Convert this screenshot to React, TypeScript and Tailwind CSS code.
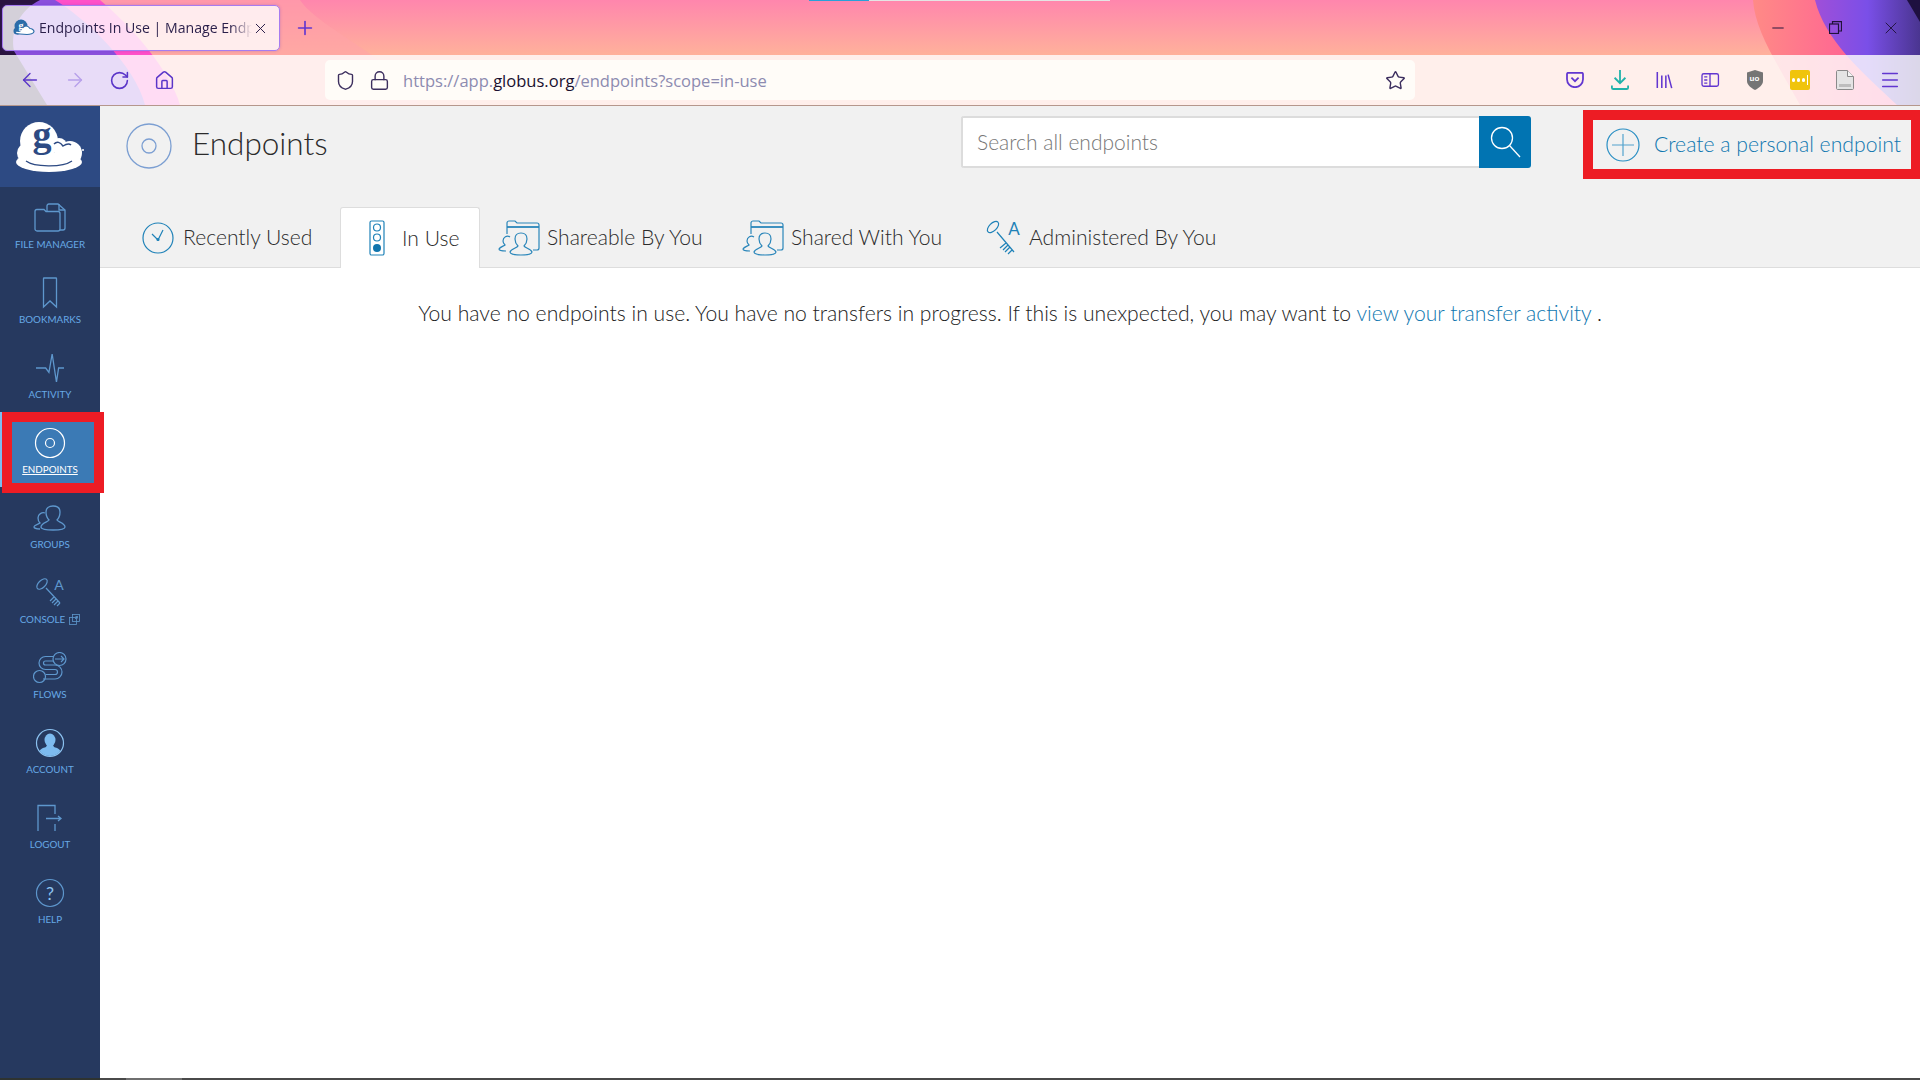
import {
  ArrowLeft,
  ArrowRight,
  Home,
  Lock,
  Menu,
  Minus,
  Plus,
  RotateCw,
  Shield,
  Star,
  X,
} from "lucide-react";
import type { ReactNode } from "react";

const Favicon = () => (
  <svg width="22" height="18" viewBox="0 0 22 18" className="shrink-0">
    <circle cx="8" cy="7" r="6.5" fill="#2b6ca8" />
    <circle cx="4" cy="12" r="3.5" fill="#2b6ca8" />
    <path d="M7 15c-3 0-5-1-5-2.500 2-1 3 .5 5-.5 2-2 3-5 6-5 2 0 3 1 4 2.500 2 0 4 1.500 4 3 0 2-4 3-7 3z" fill="#fff" stroke="#2b6ca8" strokeWidth="1.200" />
    <text x="8" y="10" textAnchor="middle" fontSize="10" fontWeight="700" fill="#fff" fontFamily="'Liberation Serif', serif">g</text>
  </svg>
);

const GlobusLogo = () => (
  <svg width="68" height="50" viewBox="0 0 68 50">
    <g fill="#fff">
      <circle cx="23" cy="19" r="19" />
      <circle cx="11" cy="31" r="10" />
      <circle cx="43" cy="24" r="8" />
      <circle cx="54" cy="31" r="12" />
      <ellipse cx="33" cy="40" rx="33" ry="10" />
    </g>
    <path d="M38 22c3-3 6-2 9 2 3-2 6-3 8-1" fill="none" stroke="#2d4a83" strokeWidth="1.500" />
    <path d="M10 39c8 6 36 7 46 0" fill="none" stroke="#2d4a83" strokeWidth="1.300" />
    <text x="26" y="25" textAnchor="middle" fontSize="38" fontWeight="700" fill="#2d4a83" fontFamily="'Liberation Serif', serif">g</text>
    <circle cx="67" cy="28" r="1" fill="#fff" />
  </svg>
);

// sidebar icons
const FileManagerIcon = () => (
  <svg width="34" height="30" viewBox="0 0 34 30" fill="none" stroke="#5e97cd" strokeWidth="1.300" className="-mt-[2px]">
    <path d="M2 9.500C2 8 3 7.500 4 7.500h7l2 2h12a2 2 0 0 1 2 2V27a2 2 0 0 1-2 2H4a2 2 0 0 1-2-2z" />
    <path d="M14 9V4c0-1 .5-2 2-2h9l7 6v18c0 1-1 2-2 2h-3" />
    <path d="M26 2v6h6" />
  </svg>
);
const BookmarkIcon = () => (
  <svg width="16" height="32" viewBox="0 0 16 32" fill="none" stroke="#5e97cd" strokeWidth="1.300">
    <path d="M2 1h12a.500.500 0 0 1 .5.500V30L8 24l-6.500 6V1.500A.500.500 0 0 1 2 1z" />
  </svg>
);
const ActivityIcon = () => (
  <svg width="28" height="28" viewBox="0 0 26 26" fill="none" stroke="#5e97cd" strokeWidth="1.200">
    <path d="M0 13H9l3 4L15 0l4 26 2-13h5" />
  </svg>
);
const EndpointsIcon = () => (
  <svg width="32" height="32" viewBox="0 0 32 32" fill="none" stroke="#fff" strokeWidth="1.200">
    <circle cx="16" cy="16" r="14.500" />
    <circle cx="16" cy="16" r="4.500" />
  </svg>
);
const GroupsIcon = () => (
  <svg width="34" height="26" viewBox="0 0 34 26" fill="none" stroke="#5e97cd" strokeWidth="1.300">
    <path d="M16 15c-1-1-3-3-3-8 0-4 3-6 7-6s7 2 7 6c0 5-2 7-3 8 1 2 8 3 8 7 0 2-5 3-12 3S8 24 8 22c0-4 7-5 8-7z" />
    <path d="M12 8c-3-1-7 1-7 5 0 2 1 4 2 5-1 1-6 2-6 4 0 1 3 2 6 2" />
  </svg>
);
const ConsoleIcon = () => (
  <svg width="32" height="32" viewBox="0 0 32 32" fill="none" stroke="#5e97cd" strokeWidth="1.200">
    <ellipse cx="8" cy="7" rx="3.500" ry="6.500" transform="rotate(45 8 7)" />
    <path d="M12 11l14 15M20 20l-4 4M22 22l-4 4M24 24l-4 4M26 26l-3 3" />
    <text x="25" y="13" textAnchor="middle" fontSize="14" fill="#5e97cd" stroke="none" fontFamily="Lato, sans-serif">A</text>
  </svg>
);
const FlowsIcon = () => (
  <svg width="34" height="32" viewBox="0 0 34 32" fill="none" stroke="#5e97cd" strokeWidth="1.200">
    <circle cx="6.500" cy="24.500" r="6" />
    <circle cx="26.500" cy="7" r="6.500" />
    <path d="M22 7h9M28 4l3 3-3 3" />
    <path d="M20 4.500H12.500a6.500 6.500 0 0 0 0 13H22a2.500 2.500 0 0 1 0 5H13" />
    <path d="M20 9H12.500a2 2 0 0 0 0 4H22a7 7 0 0 1 0 14H10" />
  </svg>
);
const AccountIcon = () => (
  <svg width="30" height="30" viewBox="0 0 30 30">
    <defs>
      <clipPath id="account-clip">
        <circle cx="15" cy="15" r="13" />
      </clipPath>
    </defs>
    <circle cx="15" cy="15" r="13.500" fill="none" stroke="#8cc2f0" strokeWidth="1.200" />
    <g clipPath="url(#account-clip)" fill="#7dbbf0">
      <ellipse cx="15" cy="12" rx="5.500" ry="6.500" />
      <path d="M12 17l-1 2c-3 1-7 2-7 7v4h22v-4c0-5-4-6-7-7l-1-2z" />
    </g>
  </svg>
);
const LogoutIcon = () => (
  <svg width="28" height="28" viewBox="0 0 28 28" fill="none" stroke="#5e97cd" strokeWidth="1.300">
    <path d="M2 27V1.500h17V10M19 20v7" />
    <path d="M10 14.500h15M22 12l3 2.500-3 2.500" />
  </svg>
);
const HelpIcon = () => (
  <svg width="30" height="30" viewBox="0 0 30 30" fill="none" stroke="#5e97cd" strokeWidth="1.200">
    <circle cx="15" cy="15" r="13.500" />
    <text x="15" y="21.500" textAnchor="middle" fontSize="18" fill="#8cc2f0" stroke="none" fontFamily="Lato, sans-serif">?</text>
  </svg>
);

// page icons
const EndpointHeaderIcon = () => (
  <svg width="46" height="46" viewBox="0 0 46 46" fill="none" stroke="#7c9fd2" strokeWidth="1.300">
    <circle cx="23" cy="23" r="22" />
    <circle cx="23" cy="23" r="7" />
  </svg>
);
const ClockIcon = () => (
  <svg width="32" height="32" viewBox="0 0 32 32" fill="none" stroke="#1f82b8" strokeWidth="1.200">
    <circle cx="16" cy="16" r="15" />
    <path d="M10 12l6 6 5-10" />
    <circle cx="16" cy="17.500" r="1" fill="#1f82b8" />
  </svg>
);
const TrafficIcon = () => (
  <svg width="16" height="36" viewBox="0 0 16 36" fill="none" stroke="#1f82b8" strokeWidth="1.200">
    <rect x="1" y="1" width="14" height="34" rx="1.500" />
    <circle cx="8" cy="7.500" r="3.500" />
    <circle cx="8" cy="17.500" r="3.500" />
    <circle cx="8" cy="28" r="4" fill="#0f74ad" stroke="none" />
  </svg>
);
const SharedIcon = () => (
  <svg width="42" height="36" viewBox="0 0 42 36" fill="none" stroke="#2a86ba" strokeWidth="1.200">
    <path d="M9 14V3c0-1 1-2 2-2h6l2 2h20c1 0 2 1 2 2v23c0 1-1 2-2 2h-4" />
    <path d="M9 7h32" strokeWidth="1.800" />
    <path d="M20 26c-1-1-3-3-3-7 0-4 2-6 6-6s6 2 6 6c0 4-2 6-3 7 1 2 7 3 8 6 0 2-5 3-11 3s-11-1-11-3c1-3 7-4 8-6z" />
    <path d="M12 17c-3-2-7 0-7 4 0 2 1 3 2 4-1 1-5 2-6 4 0 1 3 2 7 2" />
  </svg>
);
const KeyIcon = () => (
  <svg width="36" height="36" viewBox="0 0 36 36" fill="none" stroke="#1f82b8" strokeWidth="1.200">
    <ellipse cx="7" cy="7" rx="3.800" ry="7" transform="rotate(45 7 7)" />
    <path d="M11 12l17 20M20 23l-6 5M22 25l-5 5M24 27l-5 5M26 30l-4 4" />
    <text x="28" y="15" textAnchor="middle" fontSize="17" fill="#1f82b8" stroke="none" fontFamily="Lato, sans-serif">A</text>
  </svg>
);

// browser toolbar icons
const PocketIcon = () => (
  <svg width="18" height="16" viewBox="0 0 22 20" fill="none" stroke="#6236d0" strokeWidth="2.200">
    <path d="M2.500 1h17A1.500 1.500 0 0 1 21 2.500V9a10 10 0 0 1-20 0V2.500A1.500 1.500 0 0 1 2.500 1z" />
    <path d="M6.500 7l4.500 4.500L15.500 7" />
  </svg>
);
const DownloadIcon = () => (
  <svg width="18" height="20" viewBox="0 0 20 22" fill="none" stroke="#20b2aa" strokeWidth="2">
    <path d="M10 0v14M4 8.500l6 6 6-6" />
    <path d="M1 17v2.500c0 1 .5 1.500 1.500 1.500h15c1 0 1.500-.5 1.500-1.500V17" />
  </svg>
);
const LibraryIcon = () => (
  <svg width="17" height="18" viewBox="0 0 18 20" fill="none" stroke="#6236d0" strokeWidth="1.700">
    <path d="M1 1v18M6 5v14M10.500 5v14M13 4l4 15" />
  </svg>
);
const SidebarIcon = () => (
  <svg width="20" height="16" viewBox="0 0 20 18" fill="none" stroke="#6236d0" strokeWidth="1.500">
    <rect x="1" y="2" width="18.500" height="14" rx="2" />
    <path d="M10 2v14M3.500 5.500H7M3.500 9H7M3.500 12.500H7" />
  </svg>
);
const UBlockIcon = () => (
  <div className="relative flex h-[20px] w-[18px] items-center justify-center">
    <svg width="18" height="20" viewBox="0 0 18 20" className="absolute inset-0">
      <path d="M9 0l8 2.500V11c0 4-4 7-8 9-4-2-8-5-8-9V2.500z" fill="#757575" />
    </svg>
    <span className="relative -mt-[3px] font-['Liberation_Sans',sans-serif] text-[8px] leading-none font-bold text-white">uo</span>
  </div>
);
const YellowIcon = () => (
  <div className="flex h-[20px] w-[20px] items-center justify-center gap-[1.500px] rounded-[2px] bg-[#f0c40c]">
    <span className="h-[3.500px] w-[3.500px] rounded-full bg-white" />
    <span className="h-[3.500px] w-[3.500px] rounded-full bg-white" />
    <span className="h-[3.500px] w-[3.500px] rounded-full bg-white" />
    <span className="h-[10px] w-px bg-white" />
  </div>
);
const PageIcon = () => (
  <svg width="18" height="20" viewBox="0 0 18 20">
    <path d="M1.500.500h10l6 6v12c0 .5-.5 1-1 1h-15c-.5 0-1-.5-1-1V1.500c0-.5.5-1 1-1z" fill="#e4e4e4" stroke="#8a8a8a" />
    <path d="M11.500.500v6h6" fill="#f4f4f4" stroke="#8a8a8a" />
    <rect x="3" y="14" width="12" height="3" fill="#bdbdbd" />
  </svg>
);

const ChromeArt = () => (
  <svg className="absolute inset-0 h-full w-full" viewBox="0 0 1920 105" preserveAspectRatio="none">
    <defs>
      <linearGradient id="right-purple" x1="0" x2="1" y1="0" y2="0">
        <stop offset="0" stopColor="#a04fd8" />
        <stop offset="0.5" stopColor="#7a4fe8" />
        <stop offset="1" stopColor="#4a3590" />
      </linearGradient>
      <linearGradient id="right-pink" x1="0" x2="1" y1="0" y2="0">
        <stop offset="0" stopColor="#ff8a86" />
        <stop offset="1" stopColor="#ff4a9c" />
      </linearGradient>
    </defs>
    <path d="M0 0H300C320 30 400 60 420 105H0Z" fill="#ffa4a8" opacity="0.6" />
    <path d="M0 0H100C130 25 170 70 180 105H0Z" fill="#ff50c8" />
    <path d="M0 0H55C85 18 135 65 145 105H0Z" fill="#8a4fdc" />
    <path d="M0 0H40C20 10 10 30 14 51L47 105H0Z" fill="#2a1340" />
    <path d="M1753 0H1920V105H1800C1775 60 1755 30 1753 0Z" fill="url(#right-pink)" />
    <path d="M1815 0H1920V105H1897C1860 70 1825 40 1815 0Z" fill="url(#right-purple)" />
    <path d="M1907 0H1920V22Z" fill="#1e1040" />
  </svg>
);

const Tab = ({ icon, label, className }: { icon: ReactNode; label: string; className: string }) => (
  <div className={`flex h-[61px] items-center ${className}`}>
    {icon}
    <span className="-mt-[1px] whitespace-nowrap text-[21.100px] font-light text-[#2b2b2b]">{label}</span>
  </div>
);

const NavItem = ({ icon, label, extra }: { icon: ReactNode; label: string; extra?: ReactNode }) => (
  <div className="flex h-[75px] flex-col items-center pt-[13px]">
    <div className="flex h-[35px] items-center justify-center">{icon}</div>
    <div className="mt-[2px] flex items-center gap-[4px] text-[9.800px] leading-[14px] text-[#66a9e6]">
      {label}
      {extra}
    </div>
  </div>
);

const ExternalIcon = () => (
  <svg width="11" height="11" viewBox="0 0 11 11" fill="none" stroke="#5e97cd" strokeWidth="0.800">
    <rect x="3.500" y="0.500" width="7" height="7" />
    <rect x="0.500" y="3.500" width="7" height="7" />
    <path d="M6 5l2.500-2.500M6.500 2.500h2v2" />
  </svg>
);

export default function App() {
  return (
    <div className="flex h-[1080px] w-[1920px] flex-col overflow-hidden bg-white font-['Lato',sans-serif]">
      {/* browser chrome */}
      <div className="relative h-[106px] shrink-0 border-b border-[#b5978c] bg-[linear-gradient(180deg,#ff86ad_0px,#ffb19b_55px,#ffb19b_105px)]">
        <ChromeArt />
        <div className="absolute left-[809px] top-0 h-px w-[60px] bg-[#2aa0d8]" />
        <div className="absolute left-[869px] top-0 h-px w-[241px] bg-[#e4e4e4]" />

        <div className="relative flex h-[55px] items-start font-['Open_Sans',sans-serif]">
          <div className="ml-[2px] mt-[5px] flex h-[46px] w-[278px] items-center rounded-[5px] border border-[#a67cf0] bg-white/80 pl-[10px] shadow-[0_0_3px_rgba(90,50,200,0.3)]">
            <Favicon />
            <span className="ml-[4px] w-[213px] overflow-hidden whitespace-nowrap text-[14.100px] text-[#2a1f4a] [mask-image:linear-gradient(90deg,#000_90%,transparent)]">
              Endpoints In Use | Manage Endpoints
            </span>
            <X size={17} strokeWidth={1.4} className="text-[#2a1f4a]" />
          </div>
          <Plus size={22} strokeWidth={1.8} className="ml-[14px] mt-[17px] text-[#6236d0]" />
          <div className="ml-auto flex h-[55px] items-center">
            <Minus size={18} strokeWidth={1.3} className="mr-[42px] text-[#20123a]" />
            <svg width="13" height="13" viewBox="0 0 13 13" fill="none" stroke="#20123a" strokeWidth="1.200" className="mr-[39px]">
              <rect x="0.500" y="3" width="9" height="9.500" />
              <path d="M3.500 3V.6h9v9.400H9.500" />
            </svg>
            <X size={20} strokeWidth={1.1} className="mr-[19px] text-[#20123a]" />
          </div>
        </div>

        <div className="relative flex h-[50px] items-center bg-white/80">
          <ArrowLeft size={22} strokeWidth={1.5} className="ml-[19px] text-[#5a35c8]" />
          <ArrowRight size={22} strokeWidth={1.5} className="ml-[23px] text-[#b7a0ea]" />
          <RotateCw size={21} strokeWidth={1.8} className="ml-[23px] text-[#5a35c8]" />
          <Home size={21} strokeWidth={1.7} className="ml-[24px] text-[#5a35c8]" />
          <div className="ml-[150px] flex h-[40px] w-[1090px] items-center rounded-[5px] bg-[#fffcf8]">
            <Shield size={21} strokeWidth={1.6} className="ml-[10px] text-[#3c2e5e]" />
            <Lock size={21} strokeWidth={1.6} className="ml-[13px] text-[#3c2e5e]" />
            <span className="ml-[13px] mt-[3px] font-['Open_Sans',sans-serif] text-[16.550px] text-[#8d8bb0]">
              https://app.<span className="text-[#1a1030]">globus.org</span>/endpoints?scope=in-use
            </span>
            <Star size={21} strokeWidth={1.6} className="ml-auto mr-[9px] text-[#3c2e5e]" />
          </div>
          <div className="ml-[137px] grid grid-cols-[repeat(8,45px)] items-center justify-items-center">
            <PocketIcon />
            <DownloadIcon />
            <LibraryIcon />
            <SidebarIcon />
            <UBlockIcon />
            <YellowIcon />
            <PageIcon />
            <Menu size={22} strokeWidth={1.6} className="text-[#6236d0]" />
          </div>
        </div>
      </div>

      {/* app */}
      <div className="flex min-h-0 flex-1">
        <aside className="w-[100px] shrink-0 bg-[#26395f]">
          <div className="flex h-[81px] items-center justify-center bg-[#2d4a83]">
            <GlobusLogo />
          </div>
          <NavItem icon={<FileManagerIcon />} label="FILE MANAGER" />
          <NavItem icon={<BookmarkIcon />} label="BOOKMARKS" />
          <NavItem icon={<ActivityIcon />} label="ACTIVITY" />
          <div className="relative flex h-[75px] flex-col items-center bg-[#3b7ab5] pt-[13px]">
            <div className="flex h-[35px] items-center justify-center">
              <EndpointsIcon />
            </div>
            <div className="mt-[2px] text-[9.800px] leading-[14px] text-white underline">ENDPOINTS</div>
            <div className="absolute left-0 top-0 h-full w-[2px] bg-[#7dbdf0]" />
            <div className="absolute left-[2px] top-0 h-[81px] w-[102px] border-[10px] border-[#ed1c24]" />
          </div>
          <NavItem icon={<GroupsIcon />} label="GROUPS" />
          <NavItem icon={<ConsoleIcon />} label="CONSOLE" extra={<ExternalIcon />} />
          <NavItem icon={<FlowsIcon />} label="FLOWS" />
          <NavItem icon={<AccountIcon />} label="ACCOUNT" />
          <NavItem icon={<LogoutIcon />} label="LOGOUT" />
          <NavItem icon={<HelpIcon />} label="HELP" />
        </aside>

        <main className="flex min-w-0 flex-1 flex-col">
          <div className="h-[162px] shrink-0 border-b border-[#dddddd] bg-[#f1f1f1]">
            <div className="flex h-[80px] items-center">
              <div className="ml-[26px]">
                <EndpointHeaderIcon />
              </div>
              <h1 className="ml-[20px] -mt-[5px] text-[31.500px] font-light text-[#2b2b2b]">Endpoints</h1>
              <div className="ml-auto -mt-[8px] flex h-[52px] w-[570px] overflow-hidden rounded-[3px]">
                <div className="flex flex-1 items-center border-y-2 border-l-2 border-[#dcdcdc] bg-white pb-[1px] pl-[14px] text-[21px] font-light text-[#777]">
                  Search all endpoints
                </div>
                <div className="flex w-[52px] items-center justify-center bg-[#0174b2]">
                  <svg width="32" height="32" viewBox="0 0 32 32" fill="none" stroke="#fff" strokeWidth="1.300">
                    <circle cx="13" cy="12" r="10.500" />
                    <path d="M20.500 19.500L31 31" />
                  </svg>
                </div>
              </div>
              <div className="ml-[52px] -mt-[3px] flex h-[69px] w-[337px] items-center border-y-[10px] border-l-[10px] border-r-[9px] border-[#ed1c24] pl-[13px]">
                <svg width="34" height="34" viewBox="0 0 34 34" fill="none" stroke="#2a8fc4" strokeWidth="1.200">
                  <circle cx="17" cy="17" r="16" />
                  <path d="M17 6v22M6 17h22" strokeOpacity="0.800" />
                </svg>
                <span className="ml-[14px] whitespace-nowrap text-[21.200px] font-light text-[#0f77b0]">Create a personal endpoint</span>
              </div>
            </div>
            <div className="mt-[21px] flex h-[61px] pl-[20px]">
              <Tab icon={<div className="mr-[9px]"><ClockIcon /></div>} label="Recently Used" className="w-[220px] pl-[22px]" />
              <div className="flex h-[61px] w-[140px] items-center rounded-t-[3px] border-x border-t border-[#dddddd] bg-white pl-[28px]">
                <TrafficIcon />
                <span className="ml-[17px] -mt-[1px] whitespace-nowrap text-[21.100px] font-light text-[#2b2b2b]">In Use</span>
              </div>
              <Tab icon={<div className="mr-[7px]"><SharedIcon /></div>} label="Shareable By You" className="w-[242px] pl-[18px]" />
              <Tab icon={<div className="mr-[7px]"><SharedIcon /></div>} label="Shared With You" className="w-[242px] pl-[20px]" />
              <Tab icon={<div className="mr-[7px]"><KeyIcon /></div>} label="Administered By You" className="pl-[22px]" />
            </div>
          </div>
          <p className="mt-[33px] text-center text-[21.150px] font-light leading-[24px] text-[#222]">
            You have no endpoints in use. You have no transfers in progress. If this is unexpected, you may want to{" "}
            <span className="text-[#0f77b0]">view your transfer activity</span> .
          </p>
        </main>
      </div>

      {/* bottom edge of the capture */}
      <div className="flex h-[2px] shrink-0 bg-[#4a4a4a]">
        <div className="w-[100px] bg-[#2e3330]" />
        <div className="ml-[26px] w-[56px] bg-[#6f6f6f]" />
      </div>
    </div>
  );
}
